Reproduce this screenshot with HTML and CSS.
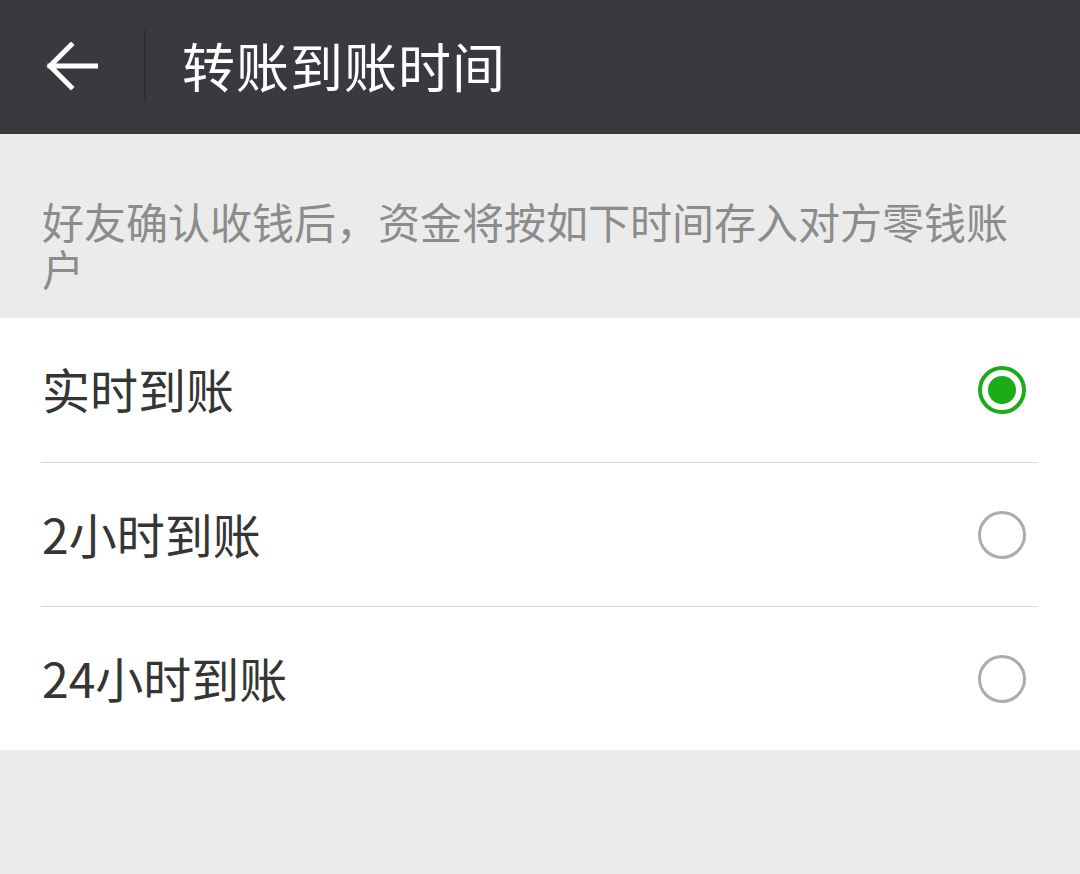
FILE: index.html
```html
<!doctype html>
<html lang="zh-CN">

<head>
  <meta charset="UTF-8" />
  <meta name="viewport" content="width=device-width, initial-scale=1.0" />
  <title>转账到账时间</title>
  <link rel="stylesheet" href="styles.css">
</head>

<body>
  <div class="app-bar">
    <a href="#" class="back" onclick="history.back()">
      <svg width="52" height="48" viewBox="0 0 52 48">
        <path d="M4 24 H50 M25 3 L4 24 L25 45" fill="none" stroke="#fff" stroke-width="5" stroke-linecap="square" />
      </svg>
    </a>
    <span class="divider"></span>
    <p>转账到账时间</p>
  </div>

  <div class="tip">
    好友确认收钱后，资金将按如下时间存入对方零钱账户
  </div>

  <div class="options">
    <label class="option">
      <span>实时到账</span>
      <span class="radio checked"></span>
    </label>
    <label class="option">
      <span>2小时到账</span>
      <span class="radio"></span>
    </label>
    <label class="option">
      <span>24小时到账</span>
      <span class="radio"></span>
    </label>
  </div>

  <script>
    document.querySelectorAll(".option").forEach(function (opt) {
      opt.addEventListener("click", function () {
        document.querySelectorAll(".radio").forEach(function (r) {
          r.classList.remove("checked");
        });
        opt.querySelector(".radio").classList.add("checked");
      });
    });
  </script>
</body>

</html>
```

FILE: styles.css
```css
* {
  box-sizing: border-box;
}

html,
body {
  margin: 0;
  padding: 0;
  width: 100%;
  height: 100%;
  font-family: 'Noto Sans CJK SC', 'Noto Sans', sans-serif;
  background-color: #ebebeb;
  color: #353535;
}

.app-bar {
  display: flex;
  align-items: center;
  height: 134px;
  background-color: #393a3f;
  padding-left: 46px;
}

.app-bar .back {
  display: flex;
  width: 52px;
  height: 48px;
  margin-top: -2px;
}

.app-bar .divider {
  width: 2px;
  height: 72px;
  background-color: #2e2f33;
  margin: -2px 0 0 46px;
}

.app-bar p {
  margin: -4px 0 0 36px;
  font-size: 53px;
  color: white;
  letter-spacing: 1px;
}

.tip {
  padding: 63px 40px 27px 42px;
  font-size: 42px;
  line-height: 47px;
  color: #8c8c8c;
}

.options {
  background-color: white;
  padding: 0 42px 0 41px;
}

.option {
  display: flex;
  align-items: center;
  justify-content: space-between;
  height: 144px;
  padding: 0 12px 0 1px;
  font-size: 48px;
  border-top: 1px solid #d9d9d9;
  cursor: pointer;
}

.option:first-child {
  border-top: none;
}

.option span:first-child {
  margin-top: -4px;
}

.radio {
  width: 48px;
  height: 48px;
  border-radius: 50%;
  border: 3px solid #acacac;
  display: flex;
  align-items: center;
  justify-content: center;
}

.radio.checked {
  border: 4px solid #1aad19;
}

.radio.checked::after {
  content: "";
  width: 28px;
  height: 28px;
  border-radius: 50%;
  background-color: #1aad19;
}
```
